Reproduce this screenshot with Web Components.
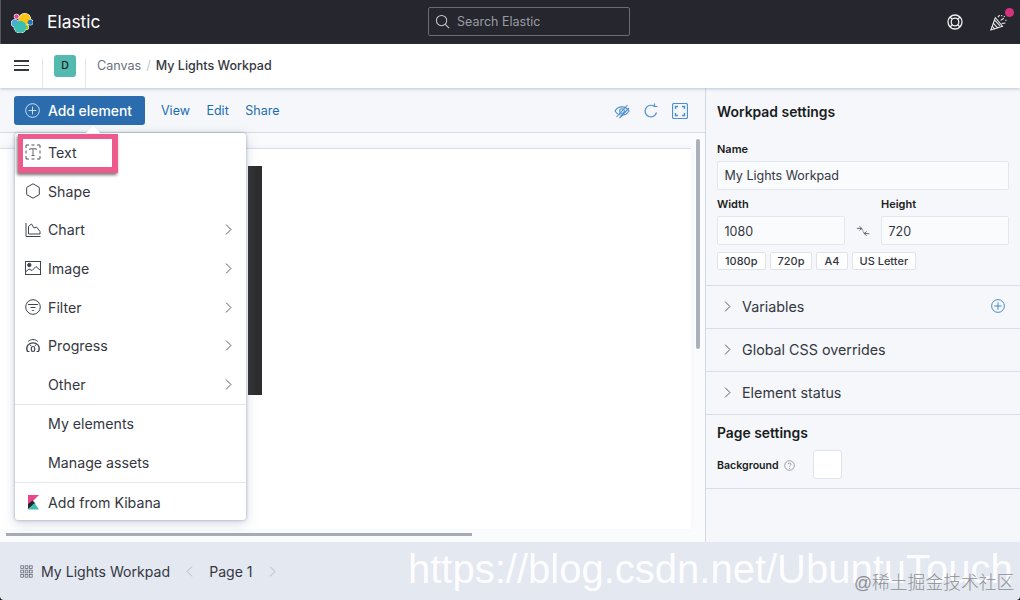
<!DOCTYPE html>
<html><head><meta charset="utf-8">
<style>
html,body{margin:0;padding:0;width:1020px;height:600px;overflow:hidden;background:#fff;font-family:Inter,"Noto Sans",sans-serif}
</style></head>
<body>
<kb-app></kb-app>
<script>
const ICONS={
search:'<circle cx="7" cy="7" r="5.5"/><path d="M11 11l4 4"/>',
help:'<circle cx="8" cy="8" r="7"/><circle cx="8" cy="8" r="3.800"/><path d="M3 3l2.300 2.300M13 3l-2.300 2.300M3 13l2.300-2.300M13 13l-2.300-2.300"/>',
party:'<path d="M5 3.500L.8 15l11-3.500z"/><path d="M3 8.500l4.500 4.700M4.300 5.800l5.200 5.400M2 11.500l2.500 2.800"/><path d="M7.500 3l1.500-2M10 6l3-2M11 9l3.500-.5M11 1v1.200M13.800 2l-.7.8M15 5.500v1"/>',
plus:'<circle cx="8" cy="8" r="7.300"/><path d="M8 3.800v8.400M3.800 8h8.400"/>',
text:'<path d="M1 4V1h3M6.500 1h3M12 1h3v3M15 6.500v3M15 12v3h-3M9.500 15h-3M4 15H1v-3M1 9.500v-3" stroke-width=".9"/><path d="M4.800 6V4.800h6.400V6M8 4.800v6.700M6.500 11.500h3" stroke-width=".8"/>',
shape:'<path d="M8 .8l6.300 3.600v7.200L8 15.200l-6.300-3.600V4.400z"/>',
chart:'<path d="M1 1v13.500h14.500"/><path d="M3.500 12V4.500l3-2.500 2.500 4 2.500-1 3.500 4.500v2.500z"/>',
image:'<rect x=".5" y="1.500" width="15" height="13"/><circle cx="4.300" cy="5" r="1.700" fill="currentColor"/><path d="M.5 12l3.500-3 3 1.500L11 6.500l4.500 4"/>',
filter:'<circle cx="8" cy="8" r="7.300"/><path d="M3 5.500h10M5.500 8.500h5M7.200 11.500h1.600"/>',
progress:'<path d="M4.500 13.500H2.500C.2 9 3.500 4.800 8 4.800s7.800 4.200 5.500 8.700h-2" stroke-width="1.200"/><path d="M3.200 3.400c3-2.500 6.600-2.500 9.600 0M5 6.500L6 8M11 6.500L10 8"/><rect x="6.300" y="8.500" width="3.400" height="5" rx="1.700" stroke-width="1.200"/>',
eye:'<path d="M1 8c3-5 10-6 14 0-3 5-10 6-14 0z"/><circle cx="8" cy="8" r="2.300"/><path d="M2.500 14L13.500 2M5.500 15L15 5"/>',
refresh:'<path d="M13.500 9.500A5.800 5.800 0 1 1 11 3.200"/><path d="M11.500.5v3h3"/>',
full:'<rect x=".5" y=".5" width="15" height="15" rx="1.500"/><path d="M3.500 6V3.500H6M10 3.500h2.500V6M12.500 10v2.500H10M6 12.500H3.500V10" stroke-width="1.400"/>',
link:'<path d="M1 5h5l2 2.500M4 2.500L6.500 5 4 7.500M15 11h-5L8 8.500M12 8.500L9.500 11l2.500 2.500"/>',
right:'<path d="M5 2L11 8l-6 6"/>',
left:'<path d="M11 2L5 8l6 6"/>',
question:'<circle cx="8" cy="8" r="7"/><path d="M5.800 6.200C6 3.800 10.200 3.800 10.200 6.200c0 1.800-2.200 1.600-2.200 3.600"/><path d="M8 11.300v1.400"/>',
grid:'<rect x="1" y="1" width="3.400" height="3.400"/><rect x="6.300" y="1" width="3.400" height="3.400"/><rect x="11.600" y="1" width="3.400" height="3.400"/><rect x="1" y="6.300" width="3.400" height="3.400"/><rect x="6.300" y="6.300" width="3.400" height="3.400"/><rect x="11.600" y="6.300" width="3.400" height="3.400"/><rect x="1" y="11.600" width="3.400" height="3.400"/><rect x="6.300" y="11.600" width="3.400" height="3.400"/><rect x="11.600" y="11.600" width="3.400" height="3.400"/>'
};
function icon(n,s,c,w){return `<svg width="${s}" height="${s}" viewBox="0 0 16 16" fill="none" stroke="${c||'currentColor'}" stroke-width="${w||1}" style="display:block;flex:none;color:${c||'inherit'}">${ICONS[n]}</svg>`}
class Base extends HTMLElement{
  constructor(){super();this.attachShadow({mode:'open'});this.shadowRoot.innerHTML=this.render()}
  a(n,d=''){return this.getAttribute(n)??d}
}
customElements.define('kb-header',class extends Base{render(){return `<style>
:host{display:flex;align-items:center;height:44px;background:#25262e;color:#fff;box-sizing:border-box;padding-left:10px;position:relative;border-left:1px solid #55565c;flex:none}
.name{font-size:17.400px;margin-left:14px;line-height:44px}
.logo{display:block}
.mid{position:absolute;left:427px;top:7px;width:202px;height:29px;box-sizing:border-box;border:1px solid #6a6c74;border-radius:2px;display:flex;align-items:center;padding-left:6px;gap:7px;color:#9a9ca3;font-size:12.500px}
.right{margin-left:auto;display:flex;align-items:center;gap:27px;padding-right:13px;position:relative}
.dot{position:absolute;right:6px;top:-6px;width:9px;height:9px;border-radius:50%;background:#d6317c}
</style>
<svg class="logo" width="22" height="22" viewBox="0 0 24 24"><g stroke="#fff" stroke-width="1.200"><circle cx="15" cy="9" r="6.300" fill="#fff"/><circle cx="10" cy="17.300" r="6.700" fill="#fff"/><circle cx="4.300" cy="13.300" r="3.800" fill="#fff"/><circle cx="6" cy="6" r="2.400" fill="#fff"/><circle cx="21" cy="12.300" r="2.800" fill="#fff"/><circle cx="16.700" cy="17.700" r="2.400" fill="#fff"/></g><circle cx="15" cy="9" r="6.300" fill="#fec514"/><circle cx="4.300" cy="13.300" r="3.800" fill="#47a8e4"/><circle cx="21" cy="12.300" r="2.800" fill="#1e79b8"/><circle cx="6" cy="6" r="2.400" fill="#e8488a"/><circle cx="16.700" cy="17.700" r="2.400" fill="#93c90e"/><circle cx="10" cy="17.300" r="6.700" fill="#3ebeb0"/></svg>
<span class="name">Elastic</span>
<div class="mid">${icon('search',15,'#c8c9cc',1.100)}<span>Search Elastic</span></div>
<div class="right">${icon('help',16,'#f0f0f2',1.300)}${icon('party',17,'#f0f0f2',1)}<i class="dot"></i></div>`}});
customElements.define('kb-crumbs',class extends Base{render(){return `<style>
:host{display:flex;align-items:center;height:44px;background:#fff;box-shadow:0 1px 3px rgba(120,135,165,.45);position:relative;z-index:2;font-size:12.600px;flex:none}
.ham{width:15px;margin-left:14px;margin-top:-1px;display:flex;flex-direction:column;gap:3px}
.ham i{display:block;height:1.500px;background:#343741}
.div{width:1px;align-self:flex-end;height:30px;background:#e3e8f0}
.av{width:22px;height:22px;border-radius:3px;background:#54b9ae;color:#1a1c21;font-size:10.500px;font-weight:500;display:flex;align-items:center;justify-content:center;margin:-1px 9px 0 11px}
.c{color:#69707d;margin-left:11px;margin-top:-2px}.s{color:#c2c7d0;margin:-2px 5px 0 5px}.t{color:#343741;font-weight:500;margin-top:-2px;font-size:12.500px}
</style><div class="ham"><i></i><i></i><i></i></div><div class="div" style="margin-left:13px"></div><div class="av">D</div><div class="div"></div>
<span class="c">Canvas</span><span class="s">/</span><span class="t">My Lights Workpad</span>`}});
customElements.define('kb-toolbar',class extends Base{render(){return `<style>
:host{display:flex;align-items:center;height:45px;box-sizing:border-box;border-bottom:1px solid #d3dae6;background:#f5f7fa;padding-left:14px;color:#1b6db3;font-size:12.500px;flex:none}
.btn{display:flex;align-items:center;height:29px;width:131px;box-sizing:border-box;background:#2a6cae;color:#fff;border-radius:3px;padding-left:11px;gap:8px;font-size:13.900px;font-weight:500;margin-top:1px}
.l{margin-left:16px;margin-top:1px}.l+.l{margin-left:16.500px}
.icons{margin-left:auto;display:flex;gap:13px;padding-right:17px;margin-top:1px;align-items:center}
</style><div class="btn">${icon('plus',15,'#d6e4f2',1)}<span>Add element</span></div><span class="l">View</span><span class="l">Edit</span><span class="l">Share</span>
<div class="icons">${icon('eye',16,'#4d8fd0',1.100)}${icon('refresh',16,'#4d8fd0',1.200)}${icon('full',16,'#4d8fd0',1.200)}</div>`}});
customElements.define('kb-menu-item',class extends Base{render(){const i=this.a('icon'),k=this.hasAttribute('arrow');return `<style>
:host{display:flex;align-items:center;height:38.700px;box-sizing:border-box;padding:0 10px 0 10px;color:#343741;font-size:14.200px;flex:none}
.i{width:16px;height:16px;margin-right:7px;flex:none}
.a{margin-left:auto;margin-right:1px}
</style><div class="i">${i?icon(i,16,'#3f4450',1):'<slot name="ic"></slot>'}</div><span><slot></slot></span>${k?`<div class="a">${icon('right',13,'#343741',1)}</div>`:''}`}});
customElements.define('kb-menu',class extends Base{render(){return `<style>
:host{position:absolute;left:15px;top:133px;width:231px;height:387px;background:#fff;border-radius:3px;box-shadow:0 0 3px rgba(90,105,135,.55),0 3px 12px rgba(120,135,165,.35);display:flex;flex-direction:column;z-index:5;box-sizing:border-box}
:host::before{content:"";position:absolute;left:71px;top:-7px;border:7px solid transparent;border-top:0;border-bottom-color:#fff}
</style><slot></slot>`}});
customElements.define('kb-highlight',class extends Base{render(){return `<style>
:host{position:absolute;left:18px;top:134px;width:100px;height:39px;box-sizing:border-box;border:solid #ec5b8c;border-width:5px 6px 6px 5px;z-index:6;box-shadow:-1px 2px 3px rgba(0,0,0,.55);pointer-events:none}
</style>`}});
customElements.define('kb-sep',class extends Base{render(){return `<style>:host{display:block;height:1px;background:#e3e8f0;flex:none}</style>`}});
customElements.define('kb-stage',class extends Base{render(){return `<style>
:host{display:block;flex:1;position:relative;background:#fafbfd;min-height:0;overflow:hidden}
.page{position:absolute;left:0;top:15px;width:691px;height:380px;background:#fff;border-top:1px solid #d9dee8;box-shadow:0 -2px 4px rgba(180,190,210,.12)}
.el{position:absolute;left:248px;top:33px;width:14px;height:229px;background:#2d2d2f}
.vs{position:absolute;left:696px;top:6px;width:4px;height:210px;background:#abb0ba;border-radius:2px}
.hs{position:absolute;left:6px;top:400px;width:466px;height:3px;background:#a6abb5}
</style><div class="page"></div><div class="el"></div><div class="vs"></div><div class="hs"></div>`}});
customElements.define('kb-footer',class extends Base{render(){return `<style>
:host{display:flex;align-items:center;height:58px;background:#e4e8f1;color:#343741;font-size:14.100px;padding-left:20px;flex:none;position:relative;z-index:1}
.n{margin-left:8px}
</style>${icon('grid',13,'#5a5f6b',.9)}<span class="n">My Lights Workpad</span><span style="margin-left:13px">${icon('left',13,'#a6abb5',1)}</span><span style="margin-left:13px">Page 1</span><span style="margin-left:13px">${icon('right',13,'#a6abb5',1)}</span>`}});
customElements.define('kb-field',class extends Base{render(){return `<style>
:host{display:block;flex:var(--f,none);min-width:0}
label{display:block;font-size:11px;font-weight:600;color:#1a1c21;line-height:16px;margin-bottom:4px}
.box{height:29px;box-sizing:border-box;background:#fafbfd;border:1px solid #e3e8f0;border-radius:2px;font-size:12.500px;color:#343741;display:flex;align-items:center;padding-left:6.500px;padding-top:var(--pt,0)}
</style><label>${this.a('label')}</label><div class="box">${this.a('value')}</div>`}});
customElements.define('kb-chip',class extends Base{render(){return `<style>
:host{display:block;height:18px;box-sizing:border-box;background:#fff;border:1px solid #dfe4ec;border-radius:2px;font-size:11px;font-weight:500;color:#343741;line-height:16px;padding:0 7px;flex:none}
</style><slot></slot>`}});
customElements.define('kb-accordion',class extends Base{render(){return `<style>
:host{display:flex;align-items:center;height:43px;box-sizing:border-box;border-bottom:1px solid #d9dfea;font-size:14.300px;color:#343741;padding:0 15px 2px;flex:none}
.t{margin-left:8px}.e{margin-left:auto}
</style>${icon('right',13,'#343741',1)}<span class="t"><slot></slot></span>${this.hasAttribute('plus')?`<span class="e">${icon('plus',14,'#2f7ec7',1)}</span>`:''}`}});
customElements.define('kb-settings',class extends Base{render(){return `<style>
:host{display:flex;flex-direction:column;width:315px;box-sizing:border-box;border-left:1px solid #d3dae6;background:#f5f7fa;flex:none;min-height:0;height:100%}
.top{padding:0 11px;height:198px;box-sizing:border-box;border-bottom:1px solid #d9dfea;flex:none}
h2{margin:0;font-size:13.900px;font-weight:600;color:#1a1c21;line-height:20px}
.h1{padding-top:14px;margin-bottom:19px}
.row{display:flex;align-items:flex-end;margin-top:6px;--pt:2px}
.ln{width:36px;display:flex;justify-content:center;height:29px;align-items:center;flex:none}
.chips{display:flex;gap:4px;margin-top:7px}
.ps{padding:8px 11px 0;flex:none;height:74px;box-sizing:border-box;border-bottom:1px solid #d9dfea}
.bg{display:flex;align-items:center;font-size:10.600px;font-weight:600;color:#1a1c21;margin-top:7px}
.bg span{margin-top:2px}
.sw{width:29px;height:29px;box-sizing:border-box;border:1px solid #dfe4ec;border-radius:3px;background:#fff;margin-left:18px}
.q{margin-left:5px}
</style><div class="top"><h2 class="h1">Workpad settings</h2>
<kb-field label="Name" value="My Lights Workpad"></kb-field>
<div class="row"><kb-field style="--f:1" label="Width" value="1080"></kb-field><div class="ln">${icon('link',14,'#4a4f5b',1)}</div><kb-field style="--f:1" label="Height" value="720"></kb-field></div>
<div class="chips"><kb-chip>1080p</kb-chip><kb-chip>720p</kb-chip><kb-chip>A4</kb-chip><kb-chip>US Letter</kb-chip></div></div>
<kb-accordion plus>Variables</kb-accordion><kb-accordion>Global CSS overrides</kb-accordion><kb-accordion>Element status</kb-accordion>
<div class="ps"><h2>Page settings</h2><div class="bg"><span>Background</span><span class="q">${icon('question',11,'#69707d',.9)}</span><div class="sw"></div></div></div>`}});
customElements.define('kb-watermark',class extends Base{render(){return `<style>
:host{position:absolute;inset:0;z-index:10;pointer-events:none;display:block}
.u{position:absolute;left:408px;top:544px;font:40px/50px "Liberation Sans",Arial,sans-serif;color:rgba(255,255,255,.95);white-space:nowrap}
.j{position:absolute;left:854px;top:572px;font:17.800px/22px "Liberation Sans","Noto Sans CJK SC",sans-serif;color:#8d8f94;white-space:nowrap;font-weight:300}
.c1,.c2{position:absolute;bottom:0;width:4px;height:4px;background:#111}
.c1{left:0;clip-path:path("M0 0A4 4 0 0 0 4 4H0Z")}.c2{right:0;clip-path:path("M4 0A4 4 0 0 1 0 4H4Z")}
</style><div class="u">https://blog.csdn.net/UbuntuTouch</div><div class="j">@稀土掘金技术社区</div><i class="c1"></i><i class="c2"></i>`}});
customElements.define('kb-app',class extends Base{render(){return `<style>
:host{display:flex;flex-direction:column;width:1020px;height:600px;position:relative;overflow:hidden;background:#fff;font-family:Inter,"Noto Sans",sans-serif}
.body{display:flex;flex:1;min-height:0}
.left{display:flex;flex-direction:column;width:705px;flex:none;min-height:0}
.kib{display:block}
</style>
<kb-header></kb-header><kb-crumbs></kb-crumbs>
<div class="body"><div class="left"><kb-toolbar></kb-toolbar><kb-stage></kb-stage></div><kb-settings></kb-settings></div>
<kb-footer></kb-footer>
<kb-menu>
<kb-menu-item icon="text">Text</kb-menu-item><kb-menu-item icon="shape">Shape</kb-menu-item><kb-menu-item icon="chart" arrow>Chart</kb-menu-item><kb-menu-item icon="image" arrow>Image</kb-menu-item><kb-menu-item icon="filter" arrow>Filter</kb-menu-item><kb-menu-item icon="progress" arrow>Progress</kb-menu-item><kb-menu-item arrow>Other</kb-menu-item><kb-sep></kb-sep>
<kb-menu-item style="padding-bottom:2px">My elements</kb-menu-item><kb-menu-item>Manage assets</kb-menu-item><kb-sep></kb-sep>
<kb-menu-item><svg slot="ic" class="kib" width="16" height="16" viewBox="0 0 16 16"><path d="M3 0h11L3 11z" fill="#e8488a"/><path d="M3 9l4.500-3.500 3 3L3 14z" fill="#25262e"/><path d="M3 14.500L9.500 8l4.500 6.500z" fill="#3ebeb0"/></svg>Add from Kibana</kb-menu-item>
</kb-menu>
<kb-highlight></kb-highlight>
<kb-watermark></kb-watermark>`}});
</script>
</body></html>
